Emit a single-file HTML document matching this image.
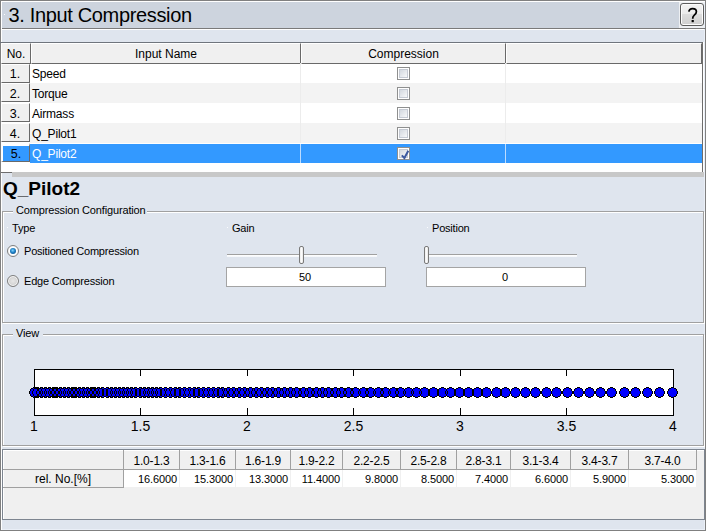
<!DOCTYPE html><html><head><meta charset="utf-8"><style>
html,body{margin:0;padding:0;width:706px;height:531px;overflow:hidden;background:#dfe5ee}
body>div,div div{position:absolute}
.t{position:absolute;white-space:nowrap;font-family:"Liberation Sans",sans-serif;font-size:12px;color:#000}
</style></head><body>
<div style="left:0px;top:0px;width:706px;height:531px;background:#808080"></div>
<div style="left:1px;top:1px;width:704px;height:529px;background:#eaeff7"></div>
<div style="left:1px;top:1px;width:704px;height:1px;background:#fff"></div>
<div style="left:1px;top:1px;width:1px;height:529px;background:#fff"></div>
<div style="left:2px;top:2px;width:702px;height:527px;background:#dfe5ee"></div>
<div style="left:2px;top:2px;width:677px;height:26px;background:#cdd4de"></div>
<div style="left:679px;top:2px;width:25px;height:26px;background:#eef0f3"></div>
<div style="left:2px;top:28px;width:704px;height:1px;background:#7a7a7a"></div>
<div style="left:2px;top:29px;width:702px;height:1px;background:#fff"></div>
<div class="t" style="left:8.6px;top:3px;font-size:20px;line-height:24px;letter-spacing:-0.35px">3. Input Compression</div>
<div style="left:680px;top:3px;width:24px;height:23px;box-sizing:border-box;border:1px solid #5c5c5c;border-radius:3px;background:linear-gradient(#f2f2f2 0,#ebebeb 50%,#dddddd 50%,#cfcfcf 100%);box-shadow:inset 0 0 0 1px #fcfcfc"><svg width="24" height="23" style="position:absolute;left:-1px;top:-1px;overflow:visible"><g transform="translate(2.2,0.6)"><path d="M6.6 8.1 C7 5.9 8.5 5 10.4 5 C12.5 5 14.2 6.1 14.2 8.1 C14.2 9.9 13.1 10.7 11.9 11.7 C10.9 12.5 10.5 13.3 10.5 15.1" stroke="#000" stroke-width="1.75" fill="none"/><rect x="9.4" y="16.4" width="2.2" height="2.2" fill="#000"/></g></svg></div>
<div style="left:2px;top:42px;width:702px;height:131px;background:#fff"></div>
<div style="left:0px;top:42px;width:703px;height:1px;background:#6f757d"></div>
<div style="left:1px;top:43px;width:30px;height:21px;background:#f0f0f0;box-sizing:border-box;border-top:1px solid #fff;border-left:1px solid #fff;border-bottom:1px solid #696969;border-right:1px solid #696969"><div class="t" style="left:0;top:0;width:28px;text-align:center;line-height:20px">No.</div></div>
<div style="left:31px;top:43px;width:270px;height:21px;background:#f0f0f0;box-sizing:border-box;border-top:1px solid #fff;border-left:1px solid #fff;border-bottom:1px solid #696969;border-right:1px solid #696969"><div class="t" style="left:0;top:0;width:268px;text-align:center;line-height:20px">Input Name</div></div>
<div style="left:301px;top:43px;width:205px;height:21px;background:#f0f0f0;box-sizing:border-box;border-top:1px solid #fff;border-left:1px solid #fff;border-bottom:1px solid #696969;border-right:1px solid #696969"><div class="t" style="left:0;top:0;width:203px;text-align:center;line-height:20px">Compression</div></div>
<div style="left:506px;top:43px;width:196px;height:21px;background:#f0f0f0;box-sizing:border-box;border-top:1px solid #fff;border-left:1px solid #fff;border-bottom:1px solid #696969;border-right:1px solid #696969"></div>
<div style="left:30px;top:64px;width:672px;height:19px;background:#ffffff"></div>
<div style="left:300px;top:63px;width:1px;height:20px;background:#ececec"></div>
<div style="left:505px;top:63px;width:1px;height:20px;background:#ececec"></div>
<div style="left:1px;top:64px;width:29px;height:19px;background:#f0f0f0;box-sizing:border-box;border-top:1px solid #fff;border-left:1px solid #fff;border-bottom:1px solid #696969;border-right:1px solid #696969"><div class="t" style="left:0;top:0px;width:26px;text-align:center;line-height:18px;font-size:12.5px">1.</div></div>
<div class="t" style="left:32px;top:64px;line-height:20px;font-size:12px;letter-spacing:-0.2px;color:#000">Speed</div>
<div style="left:397px;top:67px;width:13px;height:13px;box-sizing:border-box;border:1px solid #8e8f8f;background:#fff"><div style="left:1px;top:1px;width:9px;height:9px;box-sizing:border-box;border:1px solid #c5cad3;background:linear-gradient(135deg,#d3d8df,#f7f8f9)"></div></div>
<div style="left:30px;top:83px;width:672px;height:20px;background:#f3f3f3"></div>
<div style="left:300px;top:83px;width:1px;height:20px;background:#ececec"></div>
<div style="left:505px;top:83px;width:1px;height:20px;background:#ececec"></div>
<div style="left:1px;top:83px;width:29px;height:19px;background:#f0f0f0;box-sizing:border-box;border-top:1px solid #fff;border-left:1px solid #fff;border-bottom:1px solid #696969;border-right:1px solid #696969"><div class="t" style="left:0;top:1px;width:26px;text-align:center;line-height:18px;font-size:12.5px">2.</div></div>
<div class="t" style="left:32px;top:84px;line-height:20px;font-size:12px;letter-spacing:-0.2px;color:#000">Torque</div>
<div style="left:397px;top:87px;width:13px;height:13px;box-sizing:border-box;border:1px solid #8e8f8f;background:#fff"><div style="left:1px;top:1px;width:9px;height:9px;box-sizing:border-box;border:1px solid #c5cad3;background:linear-gradient(135deg,#d3d8df,#f7f8f9)"></div></div>
<div style="left:30px;top:103px;width:672px;height:20px;background:#ffffff"></div>
<div style="left:300px;top:103px;width:1px;height:20px;background:#ececec"></div>
<div style="left:505px;top:103px;width:1px;height:20px;background:#ececec"></div>
<div style="left:1px;top:103px;width:29px;height:19px;background:#f0f0f0;box-sizing:border-box;border-top:1px solid #fff;border-left:1px solid #fff;border-bottom:1px solid #696969;border-right:1px solid #696969"><div class="t" style="left:0;top:1px;width:26px;text-align:center;line-height:18px;font-size:12.5px">3.</div></div>
<div class="t" style="left:32px;top:104px;line-height:20px;font-size:12px;letter-spacing:-0.2px;color:#000">Airmass</div>
<div style="left:397px;top:107px;width:13px;height:13px;box-sizing:border-box;border:1px solid #8e8f8f;background:#fff"><div style="left:1px;top:1px;width:9px;height:9px;box-sizing:border-box;border:1px solid #c5cad3;background:linear-gradient(135deg,#d3d8df,#f7f8f9)"></div></div>
<div style="left:30px;top:123px;width:672px;height:20px;background:#f3f3f3"></div>
<div style="left:300px;top:123px;width:1px;height:20px;background:#ececec"></div>
<div style="left:505px;top:123px;width:1px;height:20px;background:#ececec"></div>
<div style="left:1px;top:123px;width:29px;height:19px;background:#f0f0f0;box-sizing:border-box;border-top:1px solid #fff;border-left:1px solid #fff;border-bottom:1px solid #696969;border-right:1px solid #696969"><div class="t" style="left:0;top:1px;width:26px;text-align:center;line-height:18px;font-size:12.5px">4.</div></div>
<div class="t" style="left:32px;top:124px;line-height:20px;font-size:12px;letter-spacing:-0.2px;color:#000">Q_Pilot1</div>
<div style="left:397px;top:127px;width:13px;height:13px;box-sizing:border-box;border:1px solid #8e8f8f;background:#fff"><div style="left:1px;top:1px;width:9px;height:9px;box-sizing:border-box;border:1px solid #c5cad3;background:linear-gradient(135deg,#d3d8df,#f7f8f9)"></div></div>
<div style="left:30px;top:144px;width:672px;height:19px;background:#3399ff"></div>
<div style="left:300px;top:144px;width:1px;height:19px;background:#bcdcff"></div>
<div style="left:505px;top:144px;width:1px;height:19px;background:#bcdcff"></div>
<div style="left:1px;top:143px;width:29px;height:19px;background:#3399ff;box-sizing:border-box;border-top:3px solid #fff;border-left:2px solid #fff;border-bottom:1px solid #696969;border-right:1px solid #696969"><div class="t" style="left:0;top:-1px;width:26px;text-align:center;line-height:18px;font-size:12.5px">5.</div></div>
<div class="t" style="left:32px;top:144px;line-height:20px;font-size:12px;letter-spacing:-0.2px;color:#fff">Q_Pilot2</div>
<div style="left:397px;top:147px;width:13px;height:13px;box-sizing:border-box;border:1px solid #8e8f8f;background:#fff"><div style="left:1px;top:1px;width:9px;height:9px;box-sizing:border-box;border:1px solid #c5cad3;background:linear-gradient(135deg,#d3d8df,#f7f8f9)"><svg width="9" height="9" style="position:absolute;left:1px;top:1px;overflow:visible"><path d="M0.8 4.4 L3.4 7 L7.3 -0.2" stroke="#3d5aa0" stroke-width="2" fill="none"/></svg></div></div>
<div style="left:702px;top:42px;width:1px;height:131px;background:#6d6d6d"></div>
<div style="left:1px;top:172px;width:11px;height:1px;background:#6d6d6d"></div>
<div style="left:12px;top:172px;width:692px;height:5px;background:#c8c8c8"></div>
<div class="t" style="left:3px;top:177.6px;font-size:19px;font-weight:bold;line-height:22px">Q_Pilot2</div>
<div style="left:2px;top:211px;width:702px;height:112px;box-sizing:border-box;border:1px solid #a0a0a0;box-shadow:inset 1px 1px 0 #fff, 1px 1px 0 #fff"></div>
<div style="left:13px;top:205px;width:134px;height:12px;background:#dfe5ee"></div>
<div class="t" style="left:16px;top:203px;line-height:14px;font-size:11px;letter-spacing:-0.15px">Compression Configuration</div>
<div class="t" style="left:12px;top:221px;font-size:11px;line-height:14px;letter-spacing:-0.2px">Type</div>
<div style="left:7px;top:245px;width:12px;height:12px;box-sizing:border-box;border:1px solid #7e7e7e;border-radius:50%;background:#ffffff;box-shadow:inset 0 0 0 1px #f8f8f8"><div style="left:2px;top:2px;width:6px;height:6px;border-radius:50%;background:radial-gradient(circle at 45% 40%,#7fd4ff 0,#1e7fc4 45%,#0a3f73 100%)"></div></div>
<div style="left:7px;top:275px;width:12px;height:12px;box-sizing:border-box;border:1px solid #7e7e7e;border-radius:50%;background:radial-gradient(circle at 50% 50%,#e6e6e6,#d0d0d0 70%,#f4f4f4);box-shadow:inset 0 0 0 1px #f8f8f8"></div>
<div class="t" style="left:24px;top:244px;font-size:11px;line-height:14px;letter-spacing:-0.2px">Positioned Compression</div>
<div class="t" style="left:24px;top:274px;font-size:11px;line-height:14px;letter-spacing:-0.2px">Edge Compression</div>
<div class="t" style="left:232px;top:221px;font-size:11px;line-height:14px;letter-spacing:-0.2px">Gain</div>
<div class="t" style="left:432px;top:221px;font-size:11px;line-height:14px;letter-spacing:-0.2px">Position</div>
<div style="left:227px;top:254px;width:150px;height:1px;background:#a0a0a0"></div>
<div style="left:227px;top:255px;width:150px;height:2px;background:linear-gradient(#fff,#f4f6fa)"></div>
<div style="left:299px;top:246px;width:5px;height:18px;box-sizing:border-box;border:1px solid #7a7a7a;border-radius:2px;background:linear-gradient(90deg,#e8e8e8,#fff 40%,#e6e6e6)"></div>
<div style="left:426px;top:254px;width:151px;height:1px;background:#a0a0a0"></div>
<div style="left:426px;top:255px;width:151px;height:2px;background:linear-gradient(#fff,#f4f6fa)"></div>
<div style="left:424px;top:246px;width:5px;height:18px;box-sizing:border-box;border:1px solid #7a7a7a;border-radius:2px;background:linear-gradient(90deg,#e8e8e8,#fff 40%,#e6e6e6)"></div>
<div style="left:226px;top:267px;width:160px;height:20px;box-sizing:border-box;border:1px solid #a4a4a4;background:#fff"><div class="t" style="left:-1px;top:0;width:158px;text-align:center;line-height:18px;font-size:11px">50</div></div>
<div style="left:426px;top:267px;width:160px;height:20px;box-sizing:border-box;border:1px solid #a4a4a4;background:#fff"><div class="t" style="left:-1px;top:0;width:158px;text-align:center;line-height:18px;font-size:11px">0</div></div>
<div style="left:2px;top:334px;width:702px;height:112px;box-sizing:border-box;border:1px solid #a0a0a0;box-shadow:inset 1px 1px 0 #fff, 1px 1px 0 #fff"></div>
<div style="left:13px;top:328px;width:30px;height:12px;background:#dfe5ee"></div>
<div class="t" style="left:16px;top:326px;line-height:14px;font-size:11px;letter-spacing:-0.15px">View</div>
<div style="left:7px;top:227px;width:1px;height:1px;background:#fafbfd"></div>
<div style="left:227px;top:227px;width:1px;height:1px;background:#fafbfd"></div>
<div style="left:427px;top:227px;width:1px;height:1px;background:#fafbfd"></div>
<div style="left:4px;top:14px;width:1px;height:1px;background:#fafbfd"></div>
<svg style="position:absolute;left:0;top:0" width="706" height="531"><rect x="34.5" y="369.5" width="639" height="46" fill="#fff" stroke="#000" stroke-width="1"/><rect x="140" y="369" width="1" height="7" fill="#000"/><rect x="140" y="408" width="1" height="7" fill="#000"/><rect x="247" y="369" width="1" height="7" fill="#000"/><rect x="247" y="408" width="1" height="7" fill="#000"/><rect x="353" y="369" width="1" height="7" fill="#000"/><rect x="353" y="408" width="1" height="7" fill="#000"/><rect x="460" y="369" width="1" height="7" fill="#000"/><rect x="460" y="408" width="1" height="7" fill="#000"/><rect x="566" y="369" width="1" height="7" fill="#000"/><rect x="566" y="408" width="1" height="7" fill="#000"/><path fill="#0000ff" shape-rendering="crispEdges" d="M33 388h3v1h-3zM31 389h7v2h-7zM30 391h9v3h-9zM31 394h7v2h-7zM33 396h3v1h-3zM36 388h3v1h-3zM34 389h7v2h-7zM33 391h9v3h-9zM34 394h7v2h-7zM36 396h3v1h-3zM40 388h3v1h-3zM38 389h7v2h-7zM37 391h9v3h-9zM38 394h7v2h-7zM40 396h3v1h-3zM44 388h3v1h-3zM42 389h7v2h-7zM41 391h9v3h-9zM42 394h7v2h-7zM44 396h3v1h-3zM48 388h3v1h-3zM46 389h7v2h-7zM45 391h9v3h-9zM46 394h7v2h-7zM48 396h3v1h-3zM52 388h3v1h-3zM50 389h7v2h-7zM49 391h9v3h-9zM50 394h7v2h-7zM52 396h3v1h-3zM55 388h3v1h-3zM53 389h7v2h-7zM52 391h9v3h-9zM53 394h7v2h-7zM55 396h3v1h-3zM59 388h3v1h-3zM57 389h7v2h-7zM56 391h9v3h-9zM57 394h7v2h-7zM59 396h3v1h-3zM63 388h3v1h-3zM61 389h7v2h-7zM60 391h9v3h-9zM61 394h7v2h-7zM63 396h3v1h-3zM67 388h3v1h-3zM65 389h7v2h-7zM64 391h9v3h-9zM65 394h7v2h-7zM67 396h3v1h-3zM71 388h3v1h-3zM69 389h7v2h-7zM68 391h9v3h-9zM69 394h7v2h-7zM71 396h3v1h-3zM74 388h3v1h-3zM72 389h7v2h-7zM71 391h9v3h-9zM72 394h7v2h-7zM74 396h3v1h-3zM78 388h3v1h-3zM76 389h7v2h-7zM75 391h9v3h-9zM76 394h7v2h-7zM78 396h3v1h-3zM82 388h3v1h-3zM80 389h7v2h-7zM79 391h9v3h-9zM80 394h7v2h-7zM82 396h3v1h-3zM86 388h3v1h-3zM84 389h7v2h-7zM83 391h9v3h-9zM84 394h7v2h-7zM86 396h3v1h-3zM90 388h3v1h-3zM88 389h7v2h-7zM87 391h9v3h-9zM88 394h7v2h-7zM90 396h3v1h-3zM93 388h3v1h-3zM91 389h7v2h-7zM90 391h9v3h-9zM91 394h7v2h-7zM93 396h3v1h-3zM97 388h3v1h-3zM95 389h7v2h-7zM94 391h9v3h-9zM95 394h7v2h-7zM97 396h3v1h-3zM101 388h3v1h-3zM99 389h7v2h-7zM98 391h9v3h-9zM99 394h7v2h-7zM101 396h3v1h-3zM106 388h3v1h-3zM104 389h7v2h-7zM103 391h9v3h-9zM104 394h7v2h-7zM106 396h3v1h-3zM110 388h3v1h-3zM108 389h7v2h-7zM107 391h9v3h-9zM108 394h7v2h-7zM110 396h3v1h-3zM114 388h3v1h-3zM112 389h7v2h-7zM111 391h9v3h-9zM112 394h7v2h-7zM114 396h3v1h-3zM118 388h3v1h-3zM116 389h7v2h-7zM115 391h9v3h-9zM116 394h7v2h-7zM118 396h3v1h-3zM122 388h3v1h-3zM120 389h7v2h-7zM119 391h9v3h-9zM120 394h7v2h-7zM122 396h3v1h-3zM126 388h3v1h-3zM124 389h7v2h-7zM123 391h9v3h-9zM124 394h7v2h-7zM126 396h3v1h-3zM130 388h3v1h-3zM128 389h7v2h-7zM127 391h9v3h-9zM128 394h7v2h-7zM130 396h3v1h-3zM134 388h3v1h-3zM132 389h7v2h-7zM131 391h9v3h-9zM132 394h7v2h-7zM134 396h3v1h-3zM139 388h3v1h-3zM137 389h7v2h-7zM136 391h9v3h-9zM137 394h7v2h-7zM139 396h3v1h-3zM143 388h3v1h-3zM141 389h7v2h-7zM140 391h9v3h-9zM141 394h7v2h-7zM143 396h3v1h-3zM147 388h3v1h-3zM145 389h7v2h-7zM144 391h9v3h-9zM145 394h7v2h-7zM147 396h3v1h-3zM151 388h3v1h-3zM149 389h7v2h-7zM148 391h9v3h-9zM149 394h7v2h-7zM151 396h3v1h-3zM155 388h3v1h-3zM153 389h7v2h-7zM152 391h9v3h-9zM153 394h7v2h-7zM155 396h3v1h-3zM159 388h3v1h-3zM157 389h7v2h-7zM156 391h9v3h-9zM157 394h7v2h-7zM159 396h3v1h-3zM164 388h3v1h-3zM162 389h7v2h-7zM161 391h9v3h-9zM162 394h7v2h-7zM164 396h3v1h-3zM169 388h3v1h-3zM167 389h7v2h-7zM166 391h9v3h-9zM167 394h7v2h-7zM169 396h3v1h-3zM174 388h3v1h-3zM172 389h7v2h-7zM171 391h9v3h-9zM172 394h7v2h-7zM174 396h3v1h-3zM178 388h3v1h-3zM176 389h7v2h-7zM175 391h9v3h-9zM176 394h7v2h-7zM178 396h3v1h-3zM183 388h3v1h-3zM181 389h7v2h-7zM180 391h9v3h-9zM181 394h7v2h-7zM183 396h3v1h-3zM188 388h3v1h-3zM186 389h7v2h-7zM185 391h9v3h-9zM186 394h7v2h-7zM188 396h3v1h-3zM193 388h3v1h-3zM191 389h7v2h-7zM190 391h9v3h-9zM191 394h7v2h-7zM193 396h3v1h-3zM197 388h3v1h-3zM195 389h7v2h-7zM194 391h9v3h-9zM195 394h7v2h-7zM197 396h3v1h-3zM202 388h3v1h-3zM200 389h7v2h-7zM199 391h9v3h-9zM200 394h7v2h-7zM202 396h3v1h-3zM207 388h3v1h-3zM205 389h7v2h-7zM204 391h9v3h-9zM205 394h7v2h-7zM207 396h3v1h-3zM212 388h3v1h-3zM210 389h7v2h-7zM209 391h9v3h-9zM210 394h7v2h-7zM212 396h3v1h-3zM217 388h3v1h-3zM215 389h7v2h-7zM214 391h9v3h-9zM215 394h7v2h-7zM217 396h3v1h-3zM221 388h3v1h-3zM219 389h7v2h-7zM218 391h9v3h-9zM219 394h7v2h-7zM221 396h3v1h-3zM227 388h3v1h-3zM225 389h7v2h-7zM224 391h9v3h-9zM225 394h7v2h-7zM227 396h3v1h-3zM232 388h3v1h-3zM230 389h7v2h-7zM229 391h9v3h-9zM230 394h7v2h-7zM232 396h3v1h-3zM238 388h3v1h-3zM236 389h7v2h-7zM235 391h9v3h-9zM236 394h7v2h-7zM238 396h3v1h-3zM243 388h3v1h-3zM241 389h7v2h-7zM240 391h9v3h-9zM241 394h7v2h-7zM243 396h3v1h-3zM249 388h3v1h-3zM247 389h7v2h-7zM246 391h9v3h-9zM247 394h7v2h-7zM249 396h3v1h-3zM255 388h3v1h-3zM253 389h7v2h-7zM252 391h9v3h-9zM253 394h7v2h-7zM255 396h3v1h-3zM260 388h3v1h-3zM258 389h7v2h-7zM257 391h9v3h-9zM258 394h7v2h-7zM260 396h3v1h-3zM266 388h3v1h-3zM264 389h7v2h-7zM263 391h9v3h-9zM264 394h7v2h-7zM266 396h3v1h-3zM271 388h3v1h-3zM269 389h7v2h-7zM268 391h9v3h-9zM269 394h7v2h-7zM271 396h3v1h-3zM277 388h3v1h-3zM275 389h7v2h-7zM274 391h9v3h-9zM275 394h7v2h-7zM277 396h3v1h-3zM283 388h3v1h-3zM281 389h7v2h-7zM280 391h9v3h-9zM281 394h7v2h-7zM283 396h3v1h-3zM289 388h3v1h-3zM287 389h7v2h-7zM286 391h9v3h-9zM287 394h7v2h-7zM289 396h3v1h-3zM295 388h3v1h-3zM293 389h7v2h-7zM292 391h9v3h-9zM293 394h7v2h-7zM295 396h3v1h-3zM302 388h3v1h-3zM300 389h7v2h-7zM299 391h9v3h-9zM300 394h7v2h-7zM302 396h3v1h-3zM308 388h3v1h-3zM306 389h7v2h-7zM305 391h9v3h-9zM306 394h7v2h-7zM308 396h3v1h-3zM315 388h3v1h-3zM313 389h7v2h-7zM312 391h9v3h-9zM313 394h7v2h-7zM315 396h3v1h-3zM321 388h3v1h-3zM319 389h7v2h-7zM318 391h9v3h-9zM319 394h7v2h-7zM321 396h3v1h-3zM327 388h3v1h-3zM325 389h7v2h-7zM324 391h9v3h-9zM325 394h7v2h-7zM327 396h3v1h-3zM334 388h3v1h-3zM332 389h7v2h-7zM331 391h9v3h-9zM332 394h7v2h-7zM334 396h3v1h-3zM340 388h3v1h-3zM338 389h7v2h-7zM337 391h9v3h-9zM338 394h7v2h-7zM340 396h3v1h-3zM347 388h3v1h-3zM345 389h7v2h-7zM344 391h9v3h-9zM345 394h7v2h-7zM347 396h3v1h-3zM354 388h3v1h-3zM352 389h7v2h-7zM351 391h9v3h-9zM352 394h7v2h-7zM354 396h3v1h-3zM362 388h3v1h-3zM360 389h7v2h-7zM359 391h9v3h-9zM360 394h7v2h-7zM362 396h3v1h-3zM369 388h3v1h-3zM367 389h7v2h-7zM366 391h9v3h-9zM367 394h7v2h-7zM369 396h3v1h-3zM377 388h3v1h-3zM375 389h7v2h-7zM374 391h9v3h-9zM375 394h7v2h-7zM377 396h3v1h-3zM384 388h3v1h-3zM382 389h7v2h-7zM381 391h9v3h-9zM382 394h7v2h-7zM384 396h3v1h-3zM392 388h3v1h-3zM390 389h7v2h-7zM389 391h9v3h-9zM390 394h7v2h-7zM392 396h3v1h-3zM399 388h3v1h-3zM397 389h7v2h-7zM396 391h9v3h-9zM397 394h7v2h-7zM399 396h3v1h-3zM407 388h3v1h-3zM405 389h7v2h-7zM404 391h9v3h-9zM405 394h7v2h-7zM407 396h3v1h-3zM415 388h3v1h-3zM413 389h7v2h-7zM412 391h9v3h-9zM413 394h7v2h-7zM415 396h3v1h-3zM423 388h3v1h-3zM421 389h7v2h-7zM420 391h9v3h-9zM421 394h7v2h-7zM423 396h3v1h-3zM432 388h3v1h-3zM430 389h7v2h-7zM429 391h9v3h-9zM430 394h7v2h-7zM432 396h3v1h-3zM441 388h3v1h-3zM439 389h7v2h-7zM438 391h9v3h-9zM439 394h7v2h-7zM441 396h3v1h-3zM449 388h3v1h-3zM447 389h7v2h-7zM446 391h9v3h-9zM447 394h7v2h-7zM449 396h3v1h-3zM458 388h3v1h-3zM456 389h7v2h-7zM455 391h9v3h-9zM456 394h7v2h-7zM458 396h3v1h-3zM467 388h3v1h-3zM465 389h7v2h-7zM464 391h9v3h-9zM465 394h7v2h-7zM467 396h3v1h-3zM476 388h3v1h-3zM474 389h7v2h-7zM473 391h9v3h-9zM474 394h7v2h-7zM476 396h3v1h-3zM485 388h3v1h-3zM483 389h7v2h-7zM482 391h9v3h-9zM483 394h7v2h-7zM485 396h3v1h-3zM495 388h3v1h-3zM493 389h7v2h-7zM492 391h9v3h-9zM493 394h7v2h-7zM495 396h3v1h-3zM504 388h3v1h-3zM502 389h7v2h-7zM501 391h9v3h-9zM502 394h7v2h-7zM504 396h3v1h-3zM514 388h3v1h-3zM512 389h7v2h-7zM511 391h9v3h-9zM512 394h7v2h-7zM514 396h3v1h-3zM524 388h3v1h-3zM522 389h7v2h-7zM521 391h9v3h-9zM522 394h7v2h-7zM524 396h3v1h-3zM534 388h3v1h-3zM532 389h7v2h-7zM531 391h9v3h-9zM532 394h7v2h-7zM534 396h3v1h-3zM545 388h3v1h-3zM543 389h7v2h-7zM542 391h9v3h-9zM543 394h7v2h-7zM545 396h3v1h-3zM555 388h3v1h-3zM553 389h7v2h-7zM552 391h9v3h-9zM553 394h7v2h-7zM555 396h3v1h-3zM566 388h3v1h-3zM564 389h7v2h-7zM563 391h9v3h-9zM564 394h7v2h-7zM566 396h3v1h-3zM577 388h3v1h-3zM575 389h7v2h-7zM574 391h9v3h-9zM575 394h7v2h-7zM577 396h3v1h-3zM588 388h3v1h-3zM586 389h7v2h-7zM585 391h9v3h-9zM586 394h7v2h-7zM588 396h3v1h-3zM599 388h3v1h-3zM597 389h7v2h-7zM596 391h9v3h-9zM597 394h7v2h-7zM599 396h3v1h-3zM610 388h3v1h-3zM608 389h7v2h-7zM607 391h9v3h-9zM608 394h7v2h-7zM610 396h3v1h-3zM623 388h3v1h-3zM621 389h7v2h-7zM620 391h9v3h-9zM621 394h7v2h-7zM623 396h3v1h-3zM634 388h3v1h-3zM632 389h7v2h-7zM631 391h9v3h-9zM632 394h7v2h-7zM634 396h3v1h-3zM646 388h3v1h-3zM644 389h7v2h-7zM643 391h9v3h-9zM644 394h7v2h-7zM646 396h3v1h-3zM658 388h3v1h-3zM656 389h7v2h-7zM655 391h9v3h-9zM656 394h7v2h-7zM658 396h3v1h-3zM671 388h3v1h-3zM669 389h7v2h-7zM668 391h9v3h-9zM669 394h7v2h-7zM671 396h3v1h-3z"/><path fill="#000" shape-rendering="crispEdges" d="M33 387h3v1h-3zM31 388h2v1h-2zM36 388h2v1h-2zM30 389h1v2h-1zM38 389h1v2h-1zM29 391h1v3h-1zM39 391h1v3h-1zM30 394h1v2h-1zM38 394h1v2h-1zM31 396h2v1h-2zM36 396h2v1h-2zM33 397h3v1h-3zM36 387h3v1h-3zM34 388h2v1h-2zM39 388h2v1h-2zM33 389h1v2h-1zM41 389h1v2h-1zM32 391h1v3h-1zM42 391h1v3h-1zM33 394h1v2h-1zM41 394h1v2h-1zM34 396h2v1h-2zM39 396h2v1h-2zM36 397h3v1h-3zM40 387h3v1h-3zM38 388h2v1h-2zM43 388h2v1h-2zM37 389h1v2h-1zM45 389h1v2h-1zM36 391h1v3h-1zM46 391h1v3h-1zM37 394h1v2h-1zM45 394h1v2h-1zM38 396h2v1h-2zM43 396h2v1h-2zM40 397h3v1h-3zM44 387h3v1h-3zM42 388h2v1h-2zM47 388h2v1h-2zM41 389h1v2h-1zM49 389h1v2h-1zM40 391h1v3h-1zM50 391h1v3h-1zM41 394h1v2h-1zM49 394h1v2h-1zM42 396h2v1h-2zM47 396h2v1h-2zM44 397h3v1h-3zM48 387h3v1h-3zM46 388h2v1h-2zM51 388h2v1h-2zM45 389h1v2h-1zM53 389h1v2h-1zM44 391h1v3h-1zM54 391h1v3h-1zM45 394h1v2h-1zM53 394h1v2h-1zM46 396h2v1h-2zM51 396h2v1h-2zM48 397h3v1h-3zM52 387h3v1h-3zM50 388h2v1h-2zM55 388h2v1h-2zM49 389h1v2h-1zM57 389h1v2h-1zM48 391h1v3h-1zM58 391h1v3h-1zM49 394h1v2h-1zM57 394h1v2h-1zM50 396h2v1h-2zM55 396h2v1h-2zM52 397h3v1h-3zM55 387h3v1h-3zM53 388h2v1h-2zM58 388h2v1h-2zM52 389h1v2h-1zM60 389h1v2h-1zM51 391h1v3h-1zM61 391h1v3h-1zM52 394h1v2h-1zM60 394h1v2h-1zM53 396h2v1h-2zM58 396h2v1h-2zM55 397h3v1h-3zM59 387h3v1h-3zM57 388h2v1h-2zM62 388h2v1h-2zM56 389h1v2h-1zM64 389h1v2h-1zM55 391h1v3h-1zM65 391h1v3h-1zM56 394h1v2h-1zM64 394h1v2h-1zM57 396h2v1h-2zM62 396h2v1h-2zM59 397h3v1h-3zM63 387h3v1h-3zM61 388h2v1h-2zM66 388h2v1h-2zM60 389h1v2h-1zM68 389h1v2h-1zM59 391h1v3h-1zM69 391h1v3h-1zM60 394h1v2h-1zM68 394h1v2h-1zM61 396h2v1h-2zM66 396h2v1h-2zM63 397h3v1h-3zM67 387h3v1h-3zM65 388h2v1h-2zM70 388h2v1h-2zM64 389h1v2h-1zM72 389h1v2h-1zM63 391h1v3h-1zM73 391h1v3h-1zM64 394h1v2h-1zM72 394h1v2h-1zM65 396h2v1h-2zM70 396h2v1h-2zM67 397h3v1h-3zM71 387h3v1h-3zM69 388h2v1h-2zM74 388h2v1h-2zM68 389h1v2h-1zM76 389h1v2h-1zM67 391h1v3h-1zM77 391h1v3h-1zM68 394h1v2h-1zM76 394h1v2h-1zM69 396h2v1h-2zM74 396h2v1h-2zM71 397h3v1h-3zM74 387h3v1h-3zM72 388h2v1h-2zM77 388h2v1h-2zM71 389h1v2h-1zM79 389h1v2h-1zM70 391h1v3h-1zM80 391h1v3h-1zM71 394h1v2h-1zM79 394h1v2h-1zM72 396h2v1h-2zM77 396h2v1h-2zM74 397h3v1h-3zM78 387h3v1h-3zM76 388h2v1h-2zM81 388h2v1h-2zM75 389h1v2h-1zM83 389h1v2h-1zM74 391h1v3h-1zM84 391h1v3h-1zM75 394h1v2h-1zM83 394h1v2h-1zM76 396h2v1h-2zM81 396h2v1h-2zM78 397h3v1h-3zM82 387h3v1h-3zM80 388h2v1h-2zM85 388h2v1h-2zM79 389h1v2h-1zM87 389h1v2h-1zM78 391h1v3h-1zM88 391h1v3h-1zM79 394h1v2h-1zM87 394h1v2h-1zM80 396h2v1h-2zM85 396h2v1h-2zM82 397h3v1h-3zM86 387h3v1h-3zM84 388h2v1h-2zM89 388h2v1h-2zM83 389h1v2h-1zM91 389h1v2h-1zM82 391h1v3h-1zM92 391h1v3h-1zM83 394h1v2h-1zM91 394h1v2h-1zM84 396h2v1h-2zM89 396h2v1h-2zM86 397h3v1h-3zM90 387h3v1h-3zM88 388h2v1h-2zM93 388h2v1h-2zM87 389h1v2h-1zM95 389h1v2h-1zM86 391h1v3h-1zM96 391h1v3h-1zM87 394h1v2h-1zM95 394h1v2h-1zM88 396h2v1h-2zM93 396h2v1h-2zM90 397h3v1h-3zM93 387h3v1h-3zM91 388h2v1h-2zM96 388h2v1h-2zM90 389h1v2h-1zM98 389h1v2h-1zM89 391h1v3h-1zM99 391h1v3h-1zM90 394h1v2h-1zM98 394h1v2h-1zM91 396h2v1h-2zM96 396h2v1h-2zM93 397h3v1h-3zM97 387h3v1h-3zM95 388h2v1h-2zM100 388h2v1h-2zM94 389h1v2h-1zM102 389h1v2h-1zM93 391h1v3h-1zM103 391h1v3h-1zM94 394h1v2h-1zM102 394h1v2h-1zM95 396h2v1h-2zM100 396h2v1h-2zM97 397h3v1h-3zM101 387h3v1h-3zM99 388h2v1h-2zM104 388h2v1h-2zM98 389h1v2h-1zM106 389h1v2h-1zM97 391h1v3h-1zM107 391h1v3h-1zM98 394h1v2h-1zM106 394h1v2h-1zM99 396h2v1h-2zM104 396h2v1h-2zM101 397h3v1h-3zM106 387h3v1h-3zM104 388h2v1h-2zM109 388h2v1h-2zM103 389h1v2h-1zM111 389h1v2h-1zM102 391h1v3h-1zM112 391h1v3h-1zM103 394h1v2h-1zM111 394h1v2h-1zM104 396h2v1h-2zM109 396h2v1h-2zM106 397h3v1h-3zM110 387h3v1h-3zM108 388h2v1h-2zM113 388h2v1h-2zM107 389h1v2h-1zM115 389h1v2h-1zM106 391h1v3h-1zM116 391h1v3h-1zM107 394h1v2h-1zM115 394h1v2h-1zM108 396h2v1h-2zM113 396h2v1h-2zM110 397h3v1h-3zM114 387h3v1h-3zM112 388h2v1h-2zM117 388h2v1h-2zM111 389h1v2h-1zM119 389h1v2h-1zM110 391h1v3h-1zM120 391h1v3h-1zM111 394h1v2h-1zM119 394h1v2h-1zM112 396h2v1h-2zM117 396h2v1h-2zM114 397h3v1h-3zM118 387h3v1h-3zM116 388h2v1h-2zM121 388h2v1h-2zM115 389h1v2h-1zM123 389h1v2h-1zM114 391h1v3h-1zM124 391h1v3h-1zM115 394h1v2h-1zM123 394h1v2h-1zM116 396h2v1h-2zM121 396h2v1h-2zM118 397h3v1h-3zM122 387h3v1h-3zM120 388h2v1h-2zM125 388h2v1h-2zM119 389h1v2h-1zM127 389h1v2h-1zM118 391h1v3h-1zM128 391h1v3h-1zM119 394h1v2h-1zM127 394h1v2h-1zM120 396h2v1h-2zM125 396h2v1h-2zM122 397h3v1h-3zM126 387h3v1h-3zM124 388h2v1h-2zM129 388h2v1h-2zM123 389h1v2h-1zM131 389h1v2h-1zM122 391h1v3h-1zM132 391h1v3h-1zM123 394h1v2h-1zM131 394h1v2h-1zM124 396h2v1h-2zM129 396h2v1h-2zM126 397h3v1h-3zM130 387h3v1h-3zM128 388h2v1h-2zM133 388h2v1h-2zM127 389h1v2h-1zM135 389h1v2h-1zM126 391h1v3h-1zM136 391h1v3h-1zM127 394h1v2h-1zM135 394h1v2h-1zM128 396h2v1h-2zM133 396h2v1h-2zM130 397h3v1h-3zM134 387h3v1h-3zM132 388h2v1h-2zM137 388h2v1h-2zM131 389h1v2h-1zM139 389h1v2h-1zM130 391h1v3h-1zM140 391h1v3h-1zM131 394h1v2h-1zM139 394h1v2h-1zM132 396h2v1h-2zM137 396h2v1h-2zM134 397h3v1h-3zM139 387h3v1h-3zM137 388h2v1h-2zM142 388h2v1h-2zM136 389h1v2h-1zM144 389h1v2h-1zM135 391h1v3h-1zM145 391h1v3h-1zM136 394h1v2h-1zM144 394h1v2h-1zM137 396h2v1h-2zM142 396h2v1h-2zM139 397h3v1h-3zM143 387h3v1h-3zM141 388h2v1h-2zM146 388h2v1h-2zM140 389h1v2h-1zM148 389h1v2h-1zM139 391h1v3h-1zM149 391h1v3h-1zM140 394h1v2h-1zM148 394h1v2h-1zM141 396h2v1h-2zM146 396h2v1h-2zM143 397h3v1h-3zM147 387h3v1h-3zM145 388h2v1h-2zM150 388h2v1h-2zM144 389h1v2h-1zM152 389h1v2h-1zM143 391h1v3h-1zM153 391h1v3h-1zM144 394h1v2h-1zM152 394h1v2h-1zM145 396h2v1h-2zM150 396h2v1h-2zM147 397h3v1h-3zM151 387h3v1h-3zM149 388h2v1h-2zM154 388h2v1h-2zM148 389h1v2h-1zM156 389h1v2h-1zM147 391h1v3h-1zM157 391h1v3h-1zM148 394h1v2h-1zM156 394h1v2h-1zM149 396h2v1h-2zM154 396h2v1h-2zM151 397h3v1h-3zM155 387h3v1h-3zM153 388h2v1h-2zM158 388h2v1h-2zM152 389h1v2h-1zM160 389h1v2h-1zM151 391h1v3h-1zM161 391h1v3h-1zM152 394h1v2h-1zM160 394h1v2h-1zM153 396h2v1h-2zM158 396h2v1h-2zM155 397h3v1h-3zM159 387h3v1h-3zM157 388h2v1h-2zM162 388h2v1h-2zM156 389h1v2h-1zM164 389h1v2h-1zM155 391h1v3h-1zM165 391h1v3h-1zM156 394h1v2h-1zM164 394h1v2h-1zM157 396h2v1h-2zM162 396h2v1h-2zM159 397h3v1h-3zM164 387h3v1h-3zM162 388h2v1h-2zM167 388h2v1h-2zM161 389h1v2h-1zM169 389h1v2h-1zM160 391h1v3h-1zM170 391h1v3h-1zM161 394h1v2h-1zM169 394h1v2h-1zM162 396h2v1h-2zM167 396h2v1h-2zM164 397h3v1h-3zM169 387h3v1h-3zM167 388h2v1h-2zM172 388h2v1h-2zM166 389h1v2h-1zM174 389h1v2h-1zM165 391h1v3h-1zM175 391h1v3h-1zM166 394h1v2h-1zM174 394h1v2h-1zM167 396h2v1h-2zM172 396h2v1h-2zM169 397h3v1h-3zM174 387h3v1h-3zM172 388h2v1h-2zM177 388h2v1h-2zM171 389h1v2h-1zM179 389h1v2h-1zM170 391h1v3h-1zM180 391h1v3h-1zM171 394h1v2h-1zM179 394h1v2h-1zM172 396h2v1h-2zM177 396h2v1h-2zM174 397h3v1h-3zM178 387h3v1h-3zM176 388h2v1h-2zM181 388h2v1h-2zM175 389h1v2h-1zM183 389h1v2h-1zM174 391h1v3h-1zM184 391h1v3h-1zM175 394h1v2h-1zM183 394h1v2h-1zM176 396h2v1h-2zM181 396h2v1h-2zM178 397h3v1h-3zM183 387h3v1h-3zM181 388h2v1h-2zM186 388h2v1h-2zM180 389h1v2h-1zM188 389h1v2h-1zM179 391h1v3h-1zM189 391h1v3h-1zM180 394h1v2h-1zM188 394h1v2h-1zM181 396h2v1h-2zM186 396h2v1h-2zM183 397h3v1h-3zM188 387h3v1h-3zM186 388h2v1h-2zM191 388h2v1h-2zM185 389h1v2h-1zM193 389h1v2h-1zM184 391h1v3h-1zM194 391h1v3h-1zM185 394h1v2h-1zM193 394h1v2h-1zM186 396h2v1h-2zM191 396h2v1h-2zM188 397h3v1h-3zM193 387h3v1h-3zM191 388h2v1h-2zM196 388h2v1h-2zM190 389h1v2h-1zM198 389h1v2h-1zM189 391h1v3h-1zM199 391h1v3h-1zM190 394h1v2h-1zM198 394h1v2h-1zM191 396h2v1h-2zM196 396h2v1h-2zM193 397h3v1h-3zM197 387h3v1h-3zM195 388h2v1h-2zM200 388h2v1h-2zM194 389h1v2h-1zM202 389h1v2h-1zM193 391h1v3h-1zM203 391h1v3h-1zM194 394h1v2h-1zM202 394h1v2h-1zM195 396h2v1h-2zM200 396h2v1h-2zM197 397h3v1h-3zM202 387h3v1h-3zM200 388h2v1h-2zM205 388h2v1h-2zM199 389h1v2h-1zM207 389h1v2h-1zM198 391h1v3h-1zM208 391h1v3h-1zM199 394h1v2h-1zM207 394h1v2h-1zM200 396h2v1h-2zM205 396h2v1h-2zM202 397h3v1h-3zM207 387h3v1h-3zM205 388h2v1h-2zM210 388h2v1h-2zM204 389h1v2h-1zM212 389h1v2h-1zM203 391h1v3h-1zM213 391h1v3h-1zM204 394h1v2h-1zM212 394h1v2h-1zM205 396h2v1h-2zM210 396h2v1h-2zM207 397h3v1h-3zM212 387h3v1h-3zM210 388h2v1h-2zM215 388h2v1h-2zM209 389h1v2h-1zM217 389h1v2h-1zM208 391h1v3h-1zM218 391h1v3h-1zM209 394h1v2h-1zM217 394h1v2h-1zM210 396h2v1h-2zM215 396h2v1h-2zM212 397h3v1h-3zM217 387h3v1h-3zM215 388h2v1h-2zM220 388h2v1h-2zM214 389h1v2h-1zM222 389h1v2h-1zM213 391h1v3h-1zM223 391h1v3h-1zM214 394h1v2h-1zM222 394h1v2h-1zM215 396h2v1h-2zM220 396h2v1h-2zM217 397h3v1h-3zM221 387h3v1h-3zM219 388h2v1h-2zM224 388h2v1h-2zM218 389h1v2h-1zM226 389h1v2h-1zM217 391h1v3h-1zM227 391h1v3h-1zM218 394h1v2h-1zM226 394h1v2h-1zM219 396h2v1h-2zM224 396h2v1h-2zM221 397h3v1h-3zM227 387h3v1h-3zM225 388h2v1h-2zM230 388h2v1h-2zM224 389h1v2h-1zM232 389h1v2h-1zM223 391h1v3h-1zM233 391h1v3h-1zM224 394h1v2h-1zM232 394h1v2h-1zM225 396h2v1h-2zM230 396h2v1h-2zM227 397h3v1h-3zM232 387h3v1h-3zM230 388h2v1h-2zM235 388h2v1h-2zM229 389h1v2h-1zM237 389h1v2h-1zM228 391h1v3h-1zM238 391h1v3h-1zM229 394h1v2h-1zM237 394h1v2h-1zM230 396h2v1h-2zM235 396h2v1h-2zM232 397h3v1h-3zM238 387h3v1h-3zM236 388h2v1h-2zM241 388h2v1h-2zM235 389h1v2h-1zM243 389h1v2h-1zM234 391h1v3h-1zM244 391h1v3h-1zM235 394h1v2h-1zM243 394h1v2h-1zM236 396h2v1h-2zM241 396h2v1h-2zM238 397h3v1h-3zM243 387h3v1h-3zM241 388h2v1h-2zM246 388h2v1h-2zM240 389h1v2h-1zM248 389h1v2h-1zM239 391h1v3h-1zM249 391h1v3h-1zM240 394h1v2h-1zM248 394h1v2h-1zM241 396h2v1h-2zM246 396h2v1h-2zM243 397h3v1h-3zM249 387h3v1h-3zM247 388h2v1h-2zM252 388h2v1h-2zM246 389h1v2h-1zM254 389h1v2h-1zM245 391h1v3h-1zM255 391h1v3h-1zM246 394h1v2h-1zM254 394h1v2h-1zM247 396h2v1h-2zM252 396h2v1h-2zM249 397h3v1h-3zM255 387h3v1h-3zM253 388h2v1h-2zM258 388h2v1h-2zM252 389h1v2h-1zM260 389h1v2h-1zM251 391h1v3h-1zM261 391h1v3h-1zM252 394h1v2h-1zM260 394h1v2h-1zM253 396h2v1h-2zM258 396h2v1h-2zM255 397h3v1h-3zM260 387h3v1h-3zM258 388h2v1h-2zM263 388h2v1h-2zM257 389h1v2h-1zM265 389h1v2h-1zM256 391h1v3h-1zM266 391h1v3h-1zM257 394h1v2h-1zM265 394h1v2h-1zM258 396h2v1h-2zM263 396h2v1h-2zM260 397h3v1h-3zM266 387h3v1h-3zM264 388h2v1h-2zM269 388h2v1h-2zM263 389h1v2h-1zM271 389h1v2h-1zM262 391h1v3h-1zM272 391h1v3h-1zM263 394h1v2h-1zM271 394h1v2h-1zM264 396h2v1h-2zM269 396h2v1h-2zM266 397h3v1h-3zM271 387h3v1h-3zM269 388h2v1h-2zM274 388h2v1h-2zM268 389h1v2h-1zM276 389h1v2h-1zM267 391h1v3h-1zM277 391h1v3h-1zM268 394h1v2h-1zM276 394h1v2h-1zM269 396h2v1h-2zM274 396h2v1h-2zM271 397h3v1h-3zM277 387h3v1h-3zM275 388h2v1h-2zM280 388h2v1h-2zM274 389h1v2h-1zM282 389h1v2h-1zM273 391h1v3h-1zM283 391h1v3h-1zM274 394h1v2h-1zM282 394h1v2h-1zM275 396h2v1h-2zM280 396h2v1h-2zM277 397h3v1h-3zM283 387h3v1h-3zM281 388h2v1h-2zM286 388h2v1h-2zM280 389h1v2h-1zM288 389h1v2h-1zM279 391h1v3h-1zM289 391h1v3h-1zM280 394h1v2h-1zM288 394h1v2h-1zM281 396h2v1h-2zM286 396h2v1h-2zM283 397h3v1h-3zM289 387h3v1h-3zM287 388h2v1h-2zM292 388h2v1h-2zM286 389h1v2h-1zM294 389h1v2h-1zM285 391h1v3h-1zM295 391h1v3h-1zM286 394h1v2h-1zM294 394h1v2h-1zM287 396h2v1h-2zM292 396h2v1h-2zM289 397h3v1h-3zM295 387h3v1h-3zM293 388h2v1h-2zM298 388h2v1h-2zM292 389h1v2h-1zM300 389h1v2h-1zM291 391h1v3h-1zM301 391h1v3h-1zM292 394h1v2h-1zM300 394h1v2h-1zM293 396h2v1h-2zM298 396h2v1h-2zM295 397h3v1h-3zM302 387h3v1h-3zM300 388h2v1h-2zM305 388h2v1h-2zM299 389h1v2h-1zM307 389h1v2h-1zM298 391h1v3h-1zM308 391h1v3h-1zM299 394h1v2h-1zM307 394h1v2h-1zM300 396h2v1h-2zM305 396h2v1h-2zM302 397h3v1h-3zM308 387h3v1h-3zM306 388h2v1h-2zM311 388h2v1h-2zM305 389h1v2h-1zM313 389h1v2h-1zM304 391h1v3h-1zM314 391h1v3h-1zM305 394h1v2h-1zM313 394h1v2h-1zM306 396h2v1h-2zM311 396h2v1h-2zM308 397h3v1h-3zM315 387h3v1h-3zM313 388h2v1h-2zM318 388h2v1h-2zM312 389h1v2h-1zM320 389h1v2h-1zM311 391h1v3h-1zM321 391h1v3h-1zM312 394h1v2h-1zM320 394h1v2h-1zM313 396h2v1h-2zM318 396h2v1h-2zM315 397h3v1h-3zM321 387h3v1h-3zM319 388h2v1h-2zM324 388h2v1h-2zM318 389h1v2h-1zM326 389h1v2h-1zM317 391h1v3h-1zM327 391h1v3h-1zM318 394h1v2h-1zM326 394h1v2h-1zM319 396h2v1h-2zM324 396h2v1h-2zM321 397h3v1h-3zM327 387h3v1h-3zM325 388h2v1h-2zM330 388h2v1h-2zM324 389h1v2h-1zM332 389h1v2h-1zM323 391h1v3h-1zM333 391h1v3h-1zM324 394h1v2h-1zM332 394h1v2h-1zM325 396h2v1h-2zM330 396h2v1h-2zM327 397h3v1h-3zM334 387h3v1h-3zM332 388h2v1h-2zM337 388h2v1h-2zM331 389h1v2h-1zM339 389h1v2h-1zM330 391h1v3h-1zM340 391h1v3h-1zM331 394h1v2h-1zM339 394h1v2h-1zM332 396h2v1h-2zM337 396h2v1h-2zM334 397h3v1h-3zM340 387h3v1h-3zM338 388h2v1h-2zM343 388h2v1h-2zM337 389h1v2h-1zM345 389h1v2h-1zM336 391h1v3h-1zM346 391h1v3h-1zM337 394h1v2h-1zM345 394h1v2h-1zM338 396h2v1h-2zM343 396h2v1h-2zM340 397h3v1h-3zM347 387h3v1h-3zM345 388h2v1h-2zM350 388h2v1h-2zM344 389h1v2h-1zM352 389h1v2h-1zM343 391h1v3h-1zM353 391h1v3h-1zM344 394h1v2h-1zM352 394h1v2h-1zM345 396h2v1h-2zM350 396h2v1h-2zM347 397h3v1h-3zM354 387h3v1h-3zM352 388h2v1h-2zM357 388h2v1h-2zM351 389h1v2h-1zM359 389h1v2h-1zM350 391h1v3h-1zM360 391h1v3h-1zM351 394h1v2h-1zM359 394h1v2h-1zM352 396h2v1h-2zM357 396h2v1h-2zM354 397h3v1h-3zM362 387h3v1h-3zM360 388h2v1h-2zM365 388h2v1h-2zM359 389h1v2h-1zM367 389h1v2h-1zM358 391h1v3h-1zM368 391h1v3h-1zM359 394h1v2h-1zM367 394h1v2h-1zM360 396h2v1h-2zM365 396h2v1h-2zM362 397h3v1h-3zM369 387h3v1h-3zM367 388h2v1h-2zM372 388h2v1h-2zM366 389h1v2h-1zM374 389h1v2h-1zM365 391h1v3h-1zM375 391h1v3h-1zM366 394h1v2h-1zM374 394h1v2h-1zM367 396h2v1h-2zM372 396h2v1h-2zM369 397h3v1h-3zM377 387h3v1h-3zM375 388h2v1h-2zM380 388h2v1h-2zM374 389h1v2h-1zM382 389h1v2h-1zM373 391h1v3h-1zM383 391h1v3h-1zM374 394h1v2h-1zM382 394h1v2h-1zM375 396h2v1h-2zM380 396h2v1h-2zM377 397h3v1h-3zM384 387h3v1h-3zM382 388h2v1h-2zM387 388h2v1h-2zM381 389h1v2h-1zM389 389h1v2h-1zM380 391h1v3h-1zM390 391h1v3h-1zM381 394h1v2h-1zM389 394h1v2h-1zM382 396h2v1h-2zM387 396h2v1h-2zM384 397h3v1h-3zM392 387h3v1h-3zM390 388h2v1h-2zM395 388h2v1h-2zM389 389h1v2h-1zM397 389h1v2h-1zM388 391h1v3h-1zM398 391h1v3h-1zM389 394h1v2h-1zM397 394h1v2h-1zM390 396h2v1h-2zM395 396h2v1h-2zM392 397h3v1h-3zM399 387h3v1h-3zM397 388h2v1h-2zM402 388h2v1h-2zM396 389h1v2h-1zM404 389h1v2h-1zM395 391h1v3h-1zM405 391h1v3h-1zM396 394h1v2h-1zM404 394h1v2h-1zM397 396h2v1h-2zM402 396h2v1h-2zM399 397h3v1h-3zM407 387h3v1h-3zM405 388h2v1h-2zM410 388h2v1h-2zM404 389h1v2h-1zM412 389h1v2h-1zM403 391h1v3h-1zM413 391h1v3h-1zM404 394h1v2h-1zM412 394h1v2h-1zM405 396h2v1h-2zM410 396h2v1h-2zM407 397h3v1h-3zM415 387h3v1h-3zM413 388h2v1h-2zM418 388h2v1h-2zM412 389h1v2h-1zM420 389h1v2h-1zM411 391h1v3h-1zM421 391h1v3h-1zM412 394h1v2h-1zM420 394h1v2h-1zM413 396h2v1h-2zM418 396h2v1h-2zM415 397h3v1h-3zM423 387h3v1h-3zM421 388h2v1h-2zM426 388h2v1h-2zM420 389h1v2h-1zM428 389h1v2h-1zM419 391h1v3h-1zM429 391h1v3h-1zM420 394h1v2h-1zM428 394h1v2h-1zM421 396h2v1h-2zM426 396h2v1h-2zM423 397h3v1h-3zM432 387h3v1h-3zM430 388h2v1h-2zM435 388h2v1h-2zM429 389h1v2h-1zM437 389h1v2h-1zM428 391h1v3h-1zM438 391h1v3h-1zM429 394h1v2h-1zM437 394h1v2h-1zM430 396h2v1h-2zM435 396h2v1h-2zM432 397h3v1h-3zM441 387h3v1h-3zM439 388h2v1h-2zM444 388h2v1h-2zM438 389h1v2h-1zM446 389h1v2h-1zM437 391h1v3h-1zM447 391h1v3h-1zM438 394h1v2h-1zM446 394h1v2h-1zM439 396h2v1h-2zM444 396h2v1h-2zM441 397h3v1h-3zM449 387h3v1h-3zM447 388h2v1h-2zM452 388h2v1h-2zM446 389h1v2h-1zM454 389h1v2h-1zM445 391h1v3h-1zM455 391h1v3h-1zM446 394h1v2h-1zM454 394h1v2h-1zM447 396h2v1h-2zM452 396h2v1h-2zM449 397h3v1h-3zM458 387h3v1h-3zM456 388h2v1h-2zM461 388h2v1h-2zM455 389h1v2h-1zM463 389h1v2h-1zM454 391h1v3h-1zM464 391h1v3h-1zM455 394h1v2h-1zM463 394h1v2h-1zM456 396h2v1h-2zM461 396h2v1h-2zM458 397h3v1h-3zM467 387h3v1h-3zM465 388h2v1h-2zM470 388h2v1h-2zM464 389h1v2h-1zM472 389h1v2h-1zM463 391h1v3h-1zM473 391h1v3h-1zM464 394h1v2h-1zM472 394h1v2h-1zM465 396h2v1h-2zM470 396h2v1h-2zM467 397h3v1h-3zM476 387h3v1h-3zM474 388h2v1h-2zM479 388h2v1h-2zM473 389h1v2h-1zM481 389h1v2h-1zM472 391h1v3h-1zM482 391h1v3h-1zM473 394h1v2h-1zM481 394h1v2h-1zM474 396h2v1h-2zM479 396h2v1h-2zM476 397h3v1h-3zM485 387h3v1h-3zM483 388h2v1h-2zM488 388h2v1h-2zM482 389h1v2h-1zM490 389h1v2h-1zM481 391h1v3h-1zM491 391h1v3h-1zM482 394h1v2h-1zM490 394h1v2h-1zM483 396h2v1h-2zM488 396h2v1h-2zM485 397h3v1h-3zM495 387h3v1h-3zM493 388h2v1h-2zM498 388h2v1h-2zM492 389h1v2h-1zM500 389h1v2h-1zM491 391h1v3h-1zM501 391h1v3h-1zM492 394h1v2h-1zM500 394h1v2h-1zM493 396h2v1h-2zM498 396h2v1h-2zM495 397h3v1h-3zM504 387h3v1h-3zM502 388h2v1h-2zM507 388h2v1h-2zM501 389h1v2h-1zM509 389h1v2h-1zM500 391h1v3h-1zM510 391h1v3h-1zM501 394h1v2h-1zM509 394h1v2h-1zM502 396h2v1h-2zM507 396h2v1h-2zM504 397h3v1h-3zM514 387h3v1h-3zM512 388h2v1h-2zM517 388h2v1h-2zM511 389h1v2h-1zM519 389h1v2h-1zM510 391h1v3h-1zM520 391h1v3h-1zM511 394h1v2h-1zM519 394h1v2h-1zM512 396h2v1h-2zM517 396h2v1h-2zM514 397h3v1h-3zM524 387h3v1h-3zM522 388h2v1h-2zM527 388h2v1h-2zM521 389h1v2h-1zM529 389h1v2h-1zM520 391h1v3h-1zM530 391h1v3h-1zM521 394h1v2h-1zM529 394h1v2h-1zM522 396h2v1h-2zM527 396h2v1h-2zM524 397h3v1h-3zM534 387h3v1h-3zM532 388h2v1h-2zM537 388h2v1h-2zM531 389h1v2h-1zM539 389h1v2h-1zM530 391h1v3h-1zM540 391h1v3h-1zM531 394h1v2h-1zM539 394h1v2h-1zM532 396h2v1h-2zM537 396h2v1h-2zM534 397h3v1h-3zM545 387h3v1h-3zM543 388h2v1h-2zM548 388h2v1h-2zM542 389h1v2h-1zM550 389h1v2h-1zM541 391h1v3h-1zM551 391h1v3h-1zM542 394h1v2h-1zM550 394h1v2h-1zM543 396h2v1h-2zM548 396h2v1h-2zM545 397h3v1h-3zM555 387h3v1h-3zM553 388h2v1h-2zM558 388h2v1h-2zM552 389h1v2h-1zM560 389h1v2h-1zM551 391h1v3h-1zM561 391h1v3h-1zM552 394h1v2h-1zM560 394h1v2h-1zM553 396h2v1h-2zM558 396h2v1h-2zM555 397h3v1h-3zM566 387h3v1h-3zM564 388h2v1h-2zM569 388h2v1h-2zM563 389h1v2h-1zM571 389h1v2h-1zM562 391h1v3h-1zM572 391h1v3h-1zM563 394h1v2h-1zM571 394h1v2h-1zM564 396h2v1h-2zM569 396h2v1h-2zM566 397h3v1h-3zM577 387h3v1h-3zM575 388h2v1h-2zM580 388h2v1h-2zM574 389h1v2h-1zM582 389h1v2h-1zM573 391h1v3h-1zM583 391h1v3h-1zM574 394h1v2h-1zM582 394h1v2h-1zM575 396h2v1h-2zM580 396h2v1h-2zM577 397h3v1h-3zM588 387h3v1h-3zM586 388h2v1h-2zM591 388h2v1h-2zM585 389h1v2h-1zM593 389h1v2h-1zM584 391h1v3h-1zM594 391h1v3h-1zM585 394h1v2h-1zM593 394h1v2h-1zM586 396h2v1h-2zM591 396h2v1h-2zM588 397h3v1h-3zM599 387h3v1h-3zM597 388h2v1h-2zM602 388h2v1h-2zM596 389h1v2h-1zM604 389h1v2h-1zM595 391h1v3h-1zM605 391h1v3h-1zM596 394h1v2h-1zM604 394h1v2h-1zM597 396h2v1h-2zM602 396h2v1h-2zM599 397h3v1h-3zM610 387h3v1h-3zM608 388h2v1h-2zM613 388h2v1h-2zM607 389h1v2h-1zM615 389h1v2h-1zM606 391h1v3h-1zM616 391h1v3h-1zM607 394h1v2h-1zM615 394h1v2h-1zM608 396h2v1h-2zM613 396h2v1h-2zM610 397h3v1h-3zM623 387h3v1h-3zM621 388h2v1h-2zM626 388h2v1h-2zM620 389h1v2h-1zM628 389h1v2h-1zM619 391h1v3h-1zM629 391h1v3h-1zM620 394h1v2h-1zM628 394h1v2h-1zM621 396h2v1h-2zM626 396h2v1h-2zM623 397h3v1h-3zM634 387h3v1h-3zM632 388h2v1h-2zM637 388h2v1h-2zM631 389h1v2h-1zM639 389h1v2h-1zM630 391h1v3h-1zM640 391h1v3h-1zM631 394h1v2h-1zM639 394h1v2h-1zM632 396h2v1h-2zM637 396h2v1h-2zM634 397h3v1h-3zM646 387h3v1h-3zM644 388h2v1h-2zM649 388h2v1h-2zM643 389h1v2h-1zM651 389h1v2h-1zM642 391h1v3h-1zM652 391h1v3h-1zM643 394h1v2h-1zM651 394h1v2h-1zM644 396h2v1h-2zM649 396h2v1h-2zM646 397h3v1h-3zM658 387h3v1h-3zM656 388h2v1h-2zM661 388h2v1h-2zM655 389h1v2h-1zM663 389h1v2h-1zM654 391h1v3h-1zM664 391h1v3h-1zM655 394h1v2h-1zM663 394h1v2h-1zM656 396h2v1h-2zM661 396h2v1h-2zM658 397h3v1h-3zM671 387h3v1h-3zM669 388h2v1h-2zM674 388h2v1h-2zM668 389h1v2h-1zM676 389h1v2h-1zM667 391h1v3h-1zM677 391h1v3h-1zM668 394h1v2h-1zM676 394h1v2h-1zM669 396h2v1h-2zM674 396h2v1h-2zM671 397h3v1h-3z"/></svg>
<div class="t" style="left:4.0px;top:418px;width:60px;text-align:center;font-size:14px;line-height:16px">1</div>
<div class="t" style="left:110.5px;top:418px;width:60px;text-align:center;font-size:14px;line-height:16px">1.5</div>
<div class="t" style="left:217.0px;top:418px;width:60px;text-align:center;font-size:14px;line-height:16px">2</div>
<div class="t" style="left:323.5px;top:418px;width:60px;text-align:center;font-size:14px;line-height:16px">2.5</div>
<div class="t" style="left:430.0px;top:418px;width:60px;text-align:center;font-size:14px;line-height:16px">3</div>
<div class="t" style="left:536.5px;top:418px;width:60px;text-align:center;font-size:14px;line-height:16px">3.5</div>
<div class="t" style="left:643.0px;top:418px;width:60px;text-align:center;font-size:14px;line-height:16px">4</div>
<div style="left:2px;top:449px;width:703px;height:71px;background:#f0f0f0;box-sizing:border-box;border:1px solid #7d8590;box-shadow:inset 1px 1px 0 #fff"></div>
<div style="left:3px;top:469px;width:120px;height:1px;background:#a0a0a0"></div>
<div style="left:3px;top:487px;width:120px;height:1px;background:#a0a0a0"></div>
<div style="left:123px;top:450px;width:1px;height:38px;background:#a0a0a0"></div>
<div class="t" style="left:3px;top:472px;width:120px;text-align:center;line-height:14px">rel. No.[%]</div>
<div style="left:124px;top:470px;width:55px;height:17px;background:#fff"></div>
<div style="left:179px;top:450px;width:1px;height:20px;background:#a0a0a0"></div>
<div style="left:179px;top:470px;width:1px;height:17px;background:#f0f0f0"></div>
<div style="left:124px;top:469px;width:55px;height:1px;background:#a0a0a0"></div>
<div class="t" style="left:124px;top:454px;width:55px;text-align:center;line-height:14px;font-size:12px;letter-spacing:-0.2px">1.0-1.3</div>
<div class="t" style="left:124px;top:472px;width:53px;text-align:right;line-height:14px;font-size:11px;letter-spacing:-0.1px">16.6000</div>
<div style="left:180px;top:470px;width:55px;height:17px;background:#fff"></div>
<div style="left:235px;top:450px;width:1px;height:20px;background:#a0a0a0"></div>
<div style="left:235px;top:470px;width:1px;height:17px;background:#f0f0f0"></div>
<div style="left:180px;top:469px;width:55px;height:1px;background:#a0a0a0"></div>
<div class="t" style="left:180px;top:454px;width:55px;text-align:center;line-height:14px;font-size:12px;letter-spacing:-0.2px">1.3-1.6</div>
<div class="t" style="left:180px;top:472px;width:53px;text-align:right;line-height:14px;font-size:11px;letter-spacing:-0.1px">15.3000</div>
<div style="left:236px;top:470px;width:54px;height:17px;background:#fff"></div>
<div style="left:290px;top:450px;width:1px;height:20px;background:#a0a0a0"></div>
<div style="left:290px;top:470px;width:1px;height:17px;background:#f0f0f0"></div>
<div style="left:236px;top:469px;width:54px;height:1px;background:#a0a0a0"></div>
<div class="t" style="left:236px;top:454px;width:54px;text-align:center;line-height:14px;font-size:12px;letter-spacing:-0.2px">1.6-1.9</div>
<div class="t" style="left:236px;top:472px;width:52px;text-align:right;line-height:14px;font-size:11px;letter-spacing:-0.1px">13.3000</div>
<div style="left:291px;top:470px;width:51px;height:17px;background:#fff"></div>
<div style="left:342px;top:450px;width:1px;height:20px;background:#a0a0a0"></div>
<div style="left:342px;top:470px;width:1px;height:17px;background:#f0f0f0"></div>
<div style="left:291px;top:469px;width:51px;height:1px;background:#a0a0a0"></div>
<div class="t" style="left:291px;top:454px;width:51px;text-align:center;line-height:14px;font-size:12px;letter-spacing:-0.2px">1.9-2.2</div>
<div class="t" style="left:291px;top:472px;width:49px;text-align:right;line-height:14px;font-size:11px;letter-spacing:-0.1px">11.4000</div>
<div style="left:343px;top:470px;width:57px;height:17px;background:#fff"></div>
<div style="left:400px;top:450px;width:1px;height:20px;background:#a0a0a0"></div>
<div style="left:400px;top:470px;width:1px;height:17px;background:#f0f0f0"></div>
<div style="left:343px;top:469px;width:57px;height:1px;background:#a0a0a0"></div>
<div class="t" style="left:343px;top:454px;width:57px;text-align:center;line-height:14px;font-size:12px;letter-spacing:-0.2px">2.2-2.5</div>
<div class="t" style="left:343px;top:472px;width:55px;text-align:right;line-height:14px;font-size:11px;letter-spacing:-0.1px">9.8000</div>
<div style="left:401px;top:470px;width:55px;height:17px;background:#fff"></div>
<div style="left:456px;top:450px;width:1px;height:20px;background:#a0a0a0"></div>
<div style="left:456px;top:470px;width:1px;height:17px;background:#f0f0f0"></div>
<div style="left:401px;top:469px;width:55px;height:1px;background:#a0a0a0"></div>
<div class="t" style="left:401px;top:454px;width:55px;text-align:center;line-height:14px;font-size:12px;letter-spacing:-0.2px">2.5-2.8</div>
<div class="t" style="left:401px;top:472px;width:53px;text-align:right;line-height:14px;font-size:11px;letter-spacing:-0.1px">8.5000</div>
<div style="left:457px;top:470px;width:53px;height:17px;background:#fff"></div>
<div style="left:510px;top:450px;width:1px;height:20px;background:#a0a0a0"></div>
<div style="left:510px;top:470px;width:1px;height:17px;background:#f0f0f0"></div>
<div style="left:457px;top:469px;width:53px;height:1px;background:#a0a0a0"></div>
<div class="t" style="left:457px;top:454px;width:53px;text-align:center;line-height:14px;font-size:12px;letter-spacing:-0.2px">2.8-3.1</div>
<div class="t" style="left:457px;top:472px;width:51px;text-align:right;line-height:14px;font-size:11px;letter-spacing:-0.1px">7.4000</div>
<div style="left:511px;top:470px;width:59px;height:17px;background:#fff"></div>
<div style="left:570px;top:450px;width:1px;height:20px;background:#a0a0a0"></div>
<div style="left:570px;top:470px;width:1px;height:17px;background:#f0f0f0"></div>
<div style="left:511px;top:469px;width:59px;height:1px;background:#a0a0a0"></div>
<div class="t" style="left:511px;top:454px;width:59px;text-align:center;line-height:14px;font-size:12px;letter-spacing:-0.2px">3.1-3.4</div>
<div class="t" style="left:511px;top:472px;width:57px;text-align:right;line-height:14px;font-size:11px;letter-spacing:-0.1px">6.6000</div>
<div style="left:571px;top:470px;width:57px;height:17px;background:#fff"></div>
<div style="left:628px;top:450px;width:1px;height:20px;background:#a0a0a0"></div>
<div style="left:628px;top:470px;width:1px;height:17px;background:#f0f0f0"></div>
<div style="left:571px;top:469px;width:57px;height:1px;background:#a0a0a0"></div>
<div class="t" style="left:571px;top:454px;width:57px;text-align:center;line-height:14px;font-size:12px;letter-spacing:-0.2px">3.4-3.7</div>
<div class="t" style="left:571px;top:472px;width:55px;text-align:right;line-height:14px;font-size:11px;letter-spacing:-0.1px">5.9000</div>
<div style="left:629px;top:470px;width:67px;height:17px;background:#fff"></div>
<div style="left:696px;top:450px;width:1px;height:20px;background:#a0a0a0"></div>
<div style="left:696px;top:470px;width:1px;height:17px;background:#f0f0f0"></div>
<div style="left:629px;top:469px;width:67px;height:1px;background:#a0a0a0"></div>
<div class="t" style="left:629px;top:454px;width:67px;text-align:center;line-height:14px;font-size:12px;letter-spacing:-0.2px">3.7-4.0</div>
<div class="t" style="left:629px;top:472px;width:65px;text-align:right;line-height:14px;font-size:11px;letter-spacing:-0.1px">5.3000</div>
</body></html>
